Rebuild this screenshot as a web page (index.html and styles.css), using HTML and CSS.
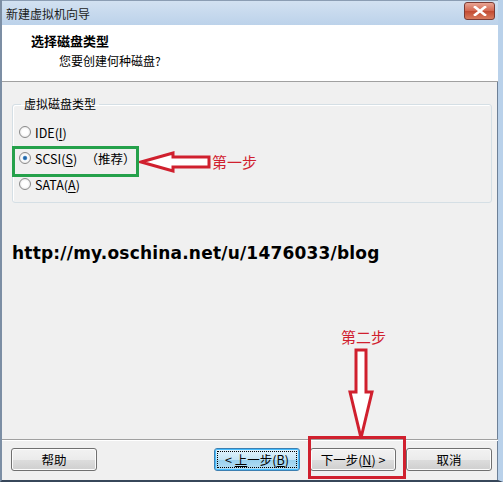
FILE: index.html
```html
<!DOCTYPE html>
<html lang="zh-CN">
<head>
    <meta charset="UTF-8">
    <title>新建虚拟机向导</title>
    <link rel="stylesheet" href="styles.css">
</head>
<body>
    <div class="window">
        <div class="titlebar">
            <span class="title">新建虚拟机向导</span>
            <span class="close-btn">
                <svg width="14" height="10" viewBox="0 0 14 10"><path d="M2 1 L12 9 M12 1 L2 9" stroke="#fff" stroke-width="2.6" stroke-linecap="square"/></svg>
            </span>
        </div>

        <div class="header">
            <h1>选择磁盘类型</h1>
            <p>您要创建何种磁盘?</p>
        </div>

        <div class="content">
            <fieldset class="group">
                <legend>虚拟磁盘类型</legend>
                <label class="radio"><span class="dot"></span>IDE(<u>I</u>)</label>
                <label class="radio"><span class="dot checked"></span>SCSI(<u>S</u>)&nbsp;&nbsp;&nbsp;（推荐）</label>
                <label class="radio"><span class="dot"></span>SATA(<u>A</u>)</label>
            </fieldset>

            <div class="url">http://my.oschina.net/u/1476033/blog</div>
        </div>

        <div class="footer">
            <button class="btn">帮助</button>
            <span class="spacer"></span>
            <button class="btn focused">&lt; <u>上</u>一步(<u>B</u>)</button>
            <button class="btn">下一步(<u>N</u>) &gt;</button>
            <button class="btn">取消</button>
        </div>

        <!-- annotations drawn over the dialog -->
        <div class="mark green-box"></div>
        <div class="mark red-box"></div>
        <svg class="arrow-left" width="72" height="22" viewBox="0 0 72 22">
            <path d="M2 11 L34 2 L34 6 L70 6 L70 16 L34 16 L34 20 Z" fill="#fff" stroke="#d0202e" stroke-width="3" stroke-linejoin="miter"/>
        </svg>
        <span class="note note-one">第一步</span>
        <span class="note note-two">第二步</span>
        <svg class="arrow-down" width="26" height="92" viewBox="0 0 26 92">
            <path d="M8 2 L18 2 L18 44 L24 44 L13 90 L2 44 L8 44 Z" fill="#fff" stroke="#d0202e" stroke-width="3" stroke-linejoin="miter"/>
        </svg>
    </div>
</body>
</html>
```

FILE: styles.css
```css
* {
    box-sizing: border-box;
}

body {
    margin: 0;
    padding: 0;
    font-family: "Noto Sans CJK SC", "Liberation Sans", sans-serif;
    font-size: 12px;
    color: #000;
}

.window {
    position: relative;
    width: 503px;
    height: 482px;
    display: flex;
    flex-direction: column;
    background-color: #f0f0f0;
    border-left: 2px solid #7c8ea4;
    border-right: 5px solid #b9d1ea;
    border-bottom: 2px solid #37475a;
    box-shadow: inset -1px 0 0 #6d8097;
}

.titlebar {
    height: 25px;
    display: flex;
    align-items: center;
    justify-content: space-between;
    padding: 0 3px 0 4px;
    background: linear-gradient(#d2e1f1, #bcd2ea);
    border-top: 1px solid #8b9db3;
}

.title {
    font-size: 12px;
    color: #1b1b1b;
}

.close-btn {
    width: 31px;
    height: 18px;
    margin-top: -4px;
    display: flex;
    align-items: center;
    justify-content: center;
    border: 1px solid #7a3b35;
    border-radius: 3px;
    background: linear-gradient(#e8a493, #d3664f 50%, #c24a32 51%, #d87b5e);
}

.header {
    height: 57px;
    background-color: #fff;
    border-bottom: 1px solid #a0a0a0;
    padding: 6px 0 0 29px;
}

.header h1 {
    margin: 0;
    font-size: 13px;
    font-weight: bold;
    line-height: 20px;
}

.header p {
    margin: 0;
    padding-left: 28px;
    font-size: 12px;
    line-height: 20px;
}

.content {
    flex: 1;
    padding: 15px 6px 0 10px;
    border-bottom: 1px solid #a0a0a0;
    box-shadow: 0 1px 0 #fff;
}

.group {
    margin: 0;
    padding: 8px 0 5px 6px;
    border: 1px solid #d5dfe5;
    border-radius: 3px;
    box-shadow: inset 1px 1px 0 #fff;
}

.group legend {
    padding: 0 3px;
    margin-left: 2px;
    font-size: 12px;
    line-height: 14px;
}

.radio {
    display: flex;
    align-items: center;
    height: 26px;
    font-size: 12.5px;
}

.radio u {
    text-underline-offset: 2px;
}

.dot {
    width: 12px;
    height: 12px;
    margin-right: 4px;
    border-radius: 50%;
    border: 1px solid #8a8a8a;
    background: radial-gradient(circle, #fff 40%, #dcdcdc);
}

.dot.checked {
    background: radial-gradient(circle, #1a4f8a 0, #3f87c6 25%, #fff 38%, #dcdcdc);
}

.url {
    margin-top: 40px;
    font-family: "DejaVu Sans", sans-serif;
    font-size: 17px;
    font-weight: bold;
    letter-spacing: 0.2px;
}

.footer {
    height: 40px;
    display: flex;
    align-items: center;
    gap: 10px;
    padding: 0 6px 2px 9px;
}

.spacer {
    flex: 1;
}

.btn {
    width: 86px;
    height: 23px;
    padding: 0;
    font-family: "Noto Sans CJK SC", "Liberation Sans", sans-serif;
    font-size: 12.5px;
    border: 1px solid #707070;
    border-radius: 3px;
    background: linear-gradient(#f2f2f2, #ebebeb 50%, #dddddd 51%, #cfcfcf);
    box-shadow: inset 0 0 0 1px #fcfcfc;
}

.btn.focused {
    border-color: #3c7fb1;
    background: linear-gradient(#e5f4fc, #c4e5f6 50%, #98d1ef 51%, #b6dff4);
    box-shadow: inset 0 0 0 1px #48bdfe;
    outline: 1px dotted #000;
    outline-offset: -4px;
}

.mark {
    position: absolute;
    border-style: solid;
    border-width: 3px;
}

.green-box {
    left: 10px;
    top: 146px;
    width: 127px;
    height: 31px;
    border-color: #25a14b;
}

.red-box {
    left: 306px;
    top: 436px;
    width: 98px;
    height: 43px;
    border-color: #d0202e;
}

.arrow-left {
    position: absolute;
    left: 137px;
    top: 151px;
}

.arrow-down {
    position: absolute;
    left: 346px;
    top: 348px;
}

.note {
    position: absolute;
    color: #d0202e;
    font-size: 15px;
}

.note-one {
    left: 210px;
    top: 151px;
}

.note-two {
    left: 339px;
    top: 326px;
}
```
